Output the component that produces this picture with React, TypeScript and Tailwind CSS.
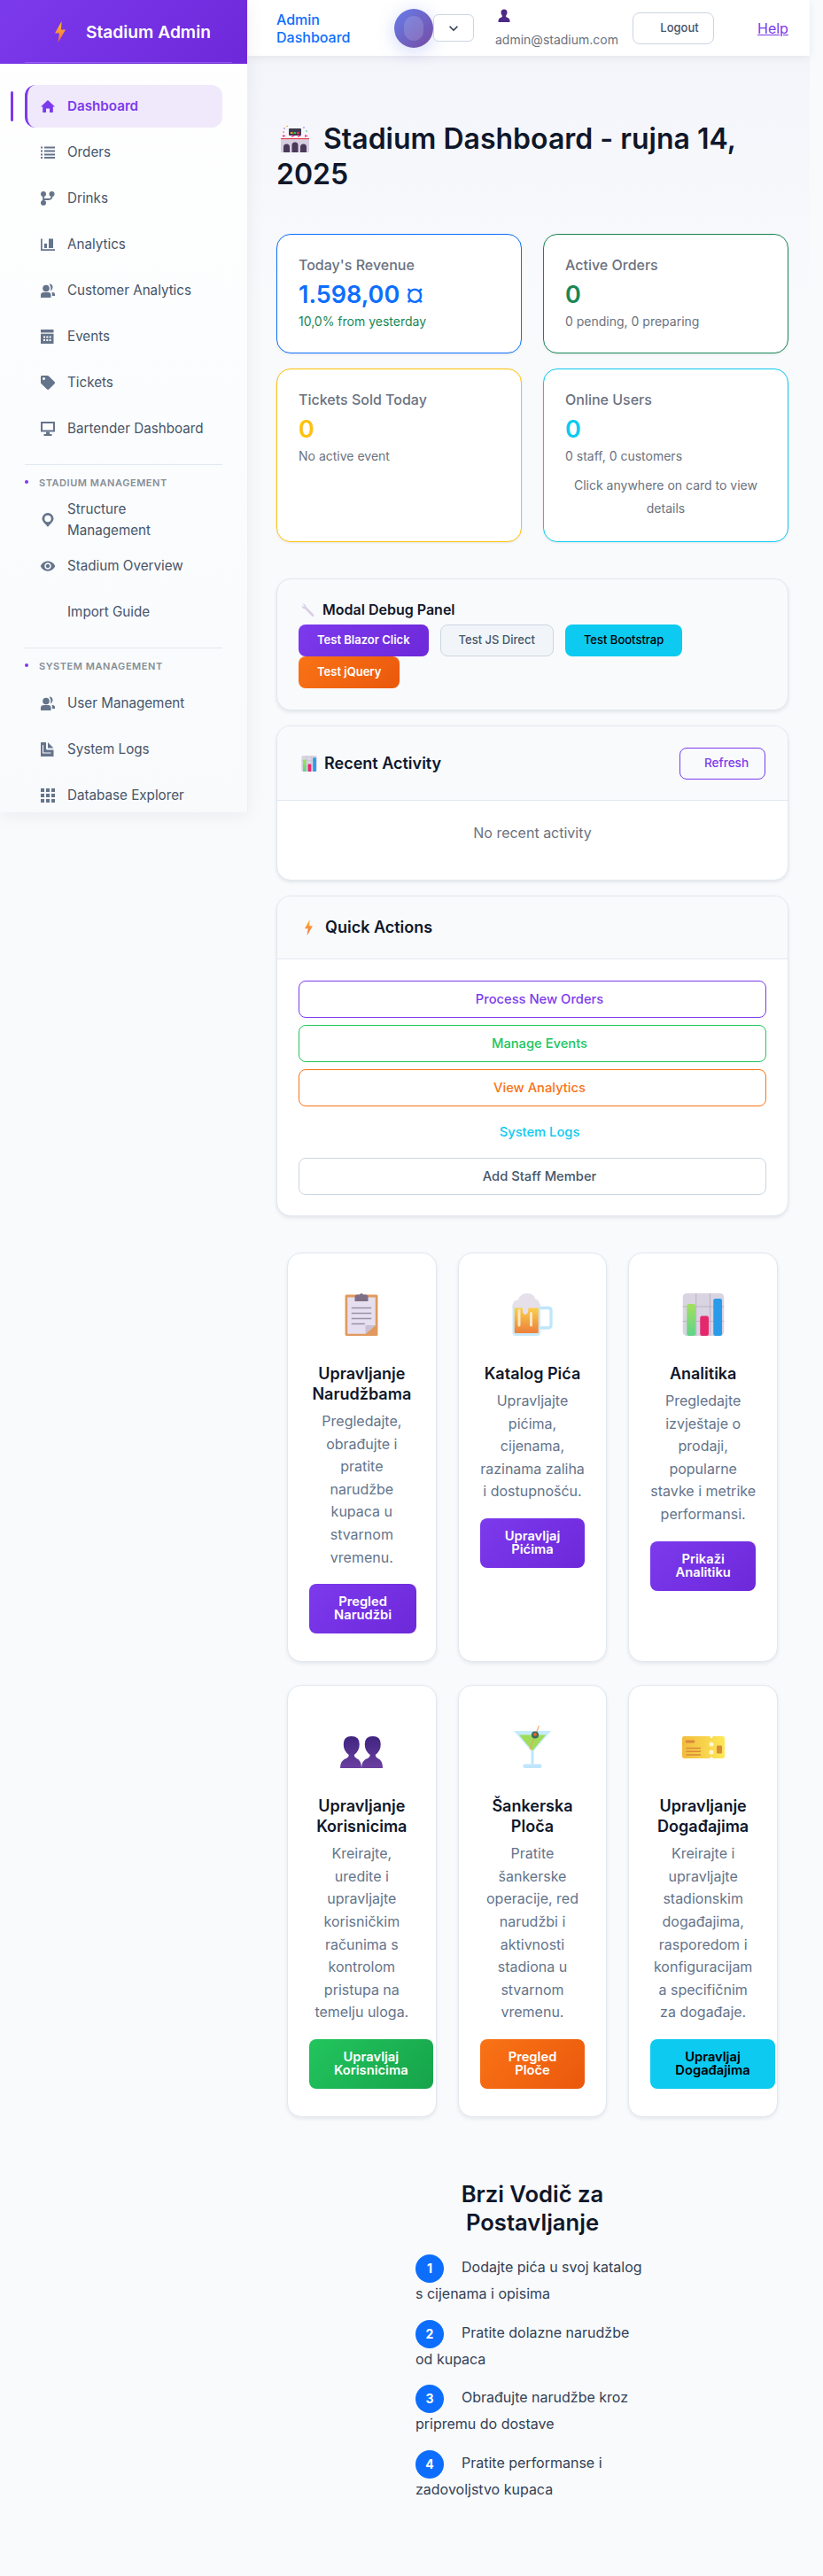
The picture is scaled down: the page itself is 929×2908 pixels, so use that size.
import React from "react";
import { MdVisibility, MdKeyboardArrowDown } from "react-icons/md";
import { FaTag } from "react-icons/fa";

const Bolt = ({ id, cls }: { id: string; cls: string }) => (
  <svg viewBox="0 0 14 24" className={cls}>
    <defs>
      <linearGradient id={id} x1="0" y1="0" x2="0" y2="1">
        <stop offset="0" stopColor="#fbbf24" />
        <stop offset="0.5" stopColor="#fb923c" />
        <stop offset="1" stopColor="#f0643c" />
      </linearGradient>
    </defs>
    <path d="M8.5 0 L1 13.5 L6 13.5 L4.5 24 L13 9.5 L8 9.5 Z" fill={`url(#${id})`} />
  </svg>
);

const Stadium = () => (
  <svg viewBox="0 0 34 32" className="mr-[15px] ml-1 inline-block h-[32px] w-[34px] align-[-5px]">
    <rect x="10" y="4" width="14" height="8" rx="1" fill="#403a4f" />
    <rect x="12" y="8" width="2.5" height="2" fill="#f59e0b" />
    <rect x="15.5" y="8" width="2.5" height="2" fill="#22c55e" />
    <rect x="19" y="8" width="2.5" height="2" fill="#ef4444" />
    <circle cx="5" cy="4" r="0.8" fill="#8b5cf6" />
    <circle cx="8" cy="1.5" r="0.8" fill="#f59e0b" />
    <circle cx="27" cy="3" r="0.8" fill="#8b5cf6" />
    <circle cx="30" cy="7" r="0.8" fill="#22c55e" />
    <circle cx="4" cy="8" r="0.8" fill="#ef4444" />
    <path d="M3 11 l4 1.5 -4 1.5z M13 11 l4 1.5 -4 1.5z M20 11 l4 1.5 -4 1.5z M28 11 l4 1.5 -4 1.5z" fill="#ec4899" />
    <rect x="1" y="15" width="32" height="1.5" fill="#e0424f" />
    <rect x="1" y="16.5" width="32" height="14.5" fill="#d6cfe0" />
    <path d="M4 31 v-6 a3.5 3.5 0 0 1 7 0 v6z M13.5 31 v-8 a3.5 3.5 0 0 1 7 0 v8z M23 31 v-6 a3.5 3.5 0 0 1 7 0 v6z" fill="#4a3a5a" />
  </svg>
);

const Wrench = () => (
  <svg viewBox="0 0 16 16" className="h-[17px] w-[16px] shrink-0">
    <path d="M1 1 C3 0.5 5.5 2 5.5 4.5 L14 13 A1.4 1.4 0 0 1 12 15 L4 6.8 C1.8 6.8 0.4 4.5 1 3 L3 4.5 L3.8 3 Z" fill="#d9cfe6" />
  </svg>
);

const Chart = ({ id, cls }: { id: string; cls: string }) => (
  <svg viewBox="0 0 32 32" className={cls} preserveAspectRatio="none">
    <defs>
      <linearGradient id={id} x1="0" y1="0" x2="0" y2="1">
        <stop offset="0" stopColor="#a3e05f" />
        <stop offset="1" stopColor="#5fd38a" />
      </linearGradient>
    </defs>
    <rect x="0.5" y="0" width="31" height="32" rx="3" fill="#d9d4e2" />
    <path d="M10.5 0 V32 M21 0 V32 M0.5 10 H31.5 M0.5 21 H31.5" stroke="#b9b3c4" strokeWidth="0.7" />
    <rect x="3.5" y="8" width="6.5" height="24" rx="1.5" fill={`url(#${id})`} />
    <rect x="13.5" y="17" width="6.5" height="15" rx="1.5" fill="#e5286e" />
    <rect x="23.5" y="4" width="6.5" height="28" rx="1.5" fill="#2a9be8" />
  </svg>
);

const Clipboard = () => (
  <svg viewBox="0 0 32 32" className="h-12 w-12">
    <rect x="3.7" y="1" width="24.6" height="31" rx="1" fill="#e09a5f" />
    <path d="M5.5 3 H26.5 V24 L19 30.5 H5.5 Z" fill="#e6dff0" />
    <path d="M19 30.5 L26.5 24 H20 Q19 24 19 25 Z" fill="#c9c0d4" />
    <path d="M11 3 Q11 1 13 1 H14.5 Q16 -1 17.5 1 H19 Q21 1 21 3 V6 H11 Z" fill="#7d7086" />
    <path d="M8.5 11 H23.5 M8.5 15 H23.5 M8.5 19 H23.5 M8.5 23 H18.5" stroke="#9b90a6" strokeWidth="1" />
  </svg>
);

const Beer = () => (
  <svg viewBox="0 0 32 32" className="h-12 w-12">
    <defs>
      <linearGradient id="beerg" x1="0" y1="0" x2="0" y2="1">
        <stop offset="0" stopColor="#fcd34d" />
        <stop offset="1" stopColor="#ec7f3c" />
      </linearGradient>
    </defs>
    <path d="M22 11 H28 Q30 11 30 13 V24 Q30 26 28 26 H22" fill="none" stroke="#bfe6fb" strokeWidth="2.2" />
    <rect x="1" y="7" width="21" height="25" rx="2.5" fill="#c7e9fb" />
    <rect x="2.5" y="10" width="18" height="20" rx="1" fill="url(#beerg)" />
    <rect x="5" y="12" width="2" height="13" rx="1" fill="#fde8c2" />
    <rect x="14" y="14" width="2" height="11" rx="1" fill="#fde8c2" />
    <path d="M1 11 Q1 5 5 5 Q7 0 12 0 Q17 0 18 4 Q22 5 22 11 H13 Q13 16 10.5 16 Q8.5 16 8.5 11 Z" fill="#e6e0ea" />
  </svg>
);

const bust = "M0 32 Q0 26 5 24.5 Q6.5 24 6.5 22 Q2.5 19 2.5 14 Q2.5 8 8.5 8 Q14.5 8 14.5 14 Q14.5 19 10.5 22 Q10.5 24 12 24.5 Q16 26 16 32 Z";

const People = () => (
  <svg viewBox="0 0 32 32" className="h-12 w-12">
    <defs>
      <linearGradient id="pg" x1="0" y1="0" x2="0" y2="1">
        <stop offset="0" stopColor="#3f2480" />
        <stop offset="1" stopColor="#6a3fa0" />
      </linearGradient>
    </defs>
    <path d={bust} fill="url(#pg)" />
    <path d={bust} fill="url(#pg)" transform="translate(16 0)" />
  </svg>
);

const UserBust = () => (
  <svg viewBox="0 0 14 15" className="h-[15px] w-[14px]">
    <path d="M0.5 15 Q0 10.5 4 9.5 Q5 9 5 8 Q3.5 6.5 3.5 4 Q3.5 0.5 7 0.5 Q10.5 0.5 10.5 4 Q10.5 6.5 9 8 Q9 9 10 9.5 Q14 10.5 13.5 15 Z" fill="#4c2a85" />
  </svg>
);

const Martini = () => (
  <svg viewBox="0 0 32 32" className="h-12 w-12">
    <path d="M2 4 H30 L16 20 Z" fill="#c4ebfb" />
    <path d="M6 7 H26 L16 19 Z" fill="#9fdc5a" />
    <rect x="15" y="19" width="2" height="10" fill="#bfe6fb" />
    <rect x="9" y="29" width="14" height="3" rx="1.2" fill="#bfe6fb" />
    <path d="M21 0 L14 18" stroke="#f0a060" strokeWidth="0.7" />
    <circle cx="18" cy="7" r="2.7" fill="#3b6a5a" />
    <circle cx="18" cy="6.6" r="1.3" fill="#e8642c" />
  </svg>
);

const Ticket = () => (
  <svg viewBox="0 0 32 32" className="h-12 w-12">
    <defs>
      <linearGradient id="tg" x1="0" y1="0" x2="1" y2="0">
        <stop offset="0" stopColor="#f2bc3e" />
        <stop offset="1" stopColor="#fde857" />
      </linearGradient>
    </defs>
    <path d="M1.5 8 H21 Q21 9.5 22 9.5 Q23 9.5 23 8 H30.5 Q32 8 32 9.5 V23 Q32 24.7 30.5 24.7 H23 Q23 23.5 22 23.5 Q21 23.5 21 24.7 H1.5 Q0 24.7 0 23 V9.5 Q0 8 1.5 8 Z" fill="url(#tg)" />
    <rect x="2.5" y="11" width="7" height="2" rx="0.8" fill="#d9893a" />
    <path d="M3 17 H14 M3 19.5 H14 M3 22 H14" stroke="#d9893a" strokeWidth="1" />
    <circle cx="22" cy="14" r="1.7" fill="#fff6d0" />
    <circle cx="22" cy="20" r="1.7" fill="#fff6d0" />
    <rect x="26" y="15" width="4" height="6" rx="0.8" fill="#d9893a" />
  </svg>
);

const ico = "h-4 w-4 fill-current";

const IconHome = () => (
  <svg viewBox="0 0 16 16" className={ico}>
    <path d="M8 1 L16 8.5 H13.8 V15 H10 V10.5 H6 V15 H2.2 V8.5 H0 Z" />
  </svg>
);
const IconList = () => (
  <svg viewBox="0 0 16 16" className={ico}>
    <path d="M0 1.5 H2 V3.5 H0Z M4 1.5 H16 V3.5 H4Z M0 5.5 H2 V7.5 H0Z M4 5.5 H16 V7.5 H4Z M0 9.5 H2 V11.5 H0Z M4 9.5 H16 V11.5 H4Z M0 13 H2 V15 H0Z M4 13 H16 V15 H4Z" />
  </svg>
);
const IconDrinks = () => (
  <svg viewBox="0 0 16 16" className="h-4 w-4">
    <circle cx="3" cy="3" r="3" fill="currentColor" />
    <circle cx="12.5" cy="3" r="3" fill="currentColor" />
    <circle cx="3" cy="13" r="3" fill="currentColor" />
    <path d="M3 3 V13 M12.5 3 V5.5 Q12.5 9 9 9 H3" fill="none" stroke="currentColor" strokeWidth="1.8" />
  </svg>
);
const IconBars = () => (
  <svg viewBox="0 0 16 16" className={ico}>
    <path d="M0 1.5 H1.7 V13.2 H16 V15 H0 Z M4 7 H7 V12 H4 Z M9 1.5 H14 V12 H9 Z" />
  </svg>
);
const IconUsers = () => (
  <svg viewBox="0 0 16 16" className={ico}>
    <circle cx="6" cy="5.5" r="3.8" />
    <path d="M0 16 V13 Q0 10 3.5 10 H8.5 Q11.5 10 11.5 13 V16 Z" />
    <path d="M9.5 0.5 A4 4 0 0 1 13.5 4.5 Q13.5 7 11 8.3 Q11.8 6 11.2 4 Q10.8 2 9.5 0.5 Z M12.5 10 H13.5 Q16 10 16 12.5 V14 H12.8 Q13.2 11.5 12.5 10 Z" />
  </svg>
);
const IconCal = () => (
  <svg viewBox="0 0 16 16" className={ico}>
    <path fillRule="evenodd" d="M0 0 H14.5 V3.5 H0 Z M0 4.8 H14.5 V16 H0 Z M3 7.5 V9.5 H5 V7.5 Z M6.3 7.5 V9.5 H8.3 V7.5 Z M9.6 7.5 V9.5 H11.6 V7.5 Z M3 11 V13 H5 V11 Z M6.3 11 V13 H8.3 V11 Z M9.6 11 V13 H11.6 V11 Z" />
  </svg>
);
const IconMonitor = () => (
  <svg viewBox="0 0 16 16" className="h-4 w-4">
    <rect x="1" y="1" width="14" height="9.5" fill="none" stroke="currentColor" strokeWidth="2" />
    <path d="M6 11.5 H10 V14 H12.5 V16 H3.5 V14 H6 Z" fill="currentColor" />
  </svg>
);
const IconPin = () => (
  <svg viewBox="0 0 16 16" className={ico}>
    <path fillRule="evenodd" d="M8 0 A6.5 6.5 0 0 1 14.5 6.5 C14.5 10 10 13 8 16 C6 13 1.5 10 1.5 6.5 A6.5 6.5 0 0 1 8 0 Z M8 2.8 A3.7 3.7 0 1 0 8 10.2 A3.7 3.7 0 1 0 8 2.8 Z" />
  </svg>
);
const IconLog = () => (
  <svg viewBox="0 0 16 16" className={ico}>
    <path d="M0 0 H6 V7 Q6 8.5 7.5 8.5 H14.5 V16 H0 Z M8 0 L14.5 6.5 H8 Z" />
    <path d="M2.5 3 V12 H11.5" fill="none" stroke="#fafbfd" strokeWidth="1.1" />
  </svg>
);
const IconGrid = () => (
  <svg viewBox="0 0 16 16" className={ico}>
    <path d="M0 0h4v4H0z M6 0h4v4H6z M12 0h4v4h-4z M0 6h4v4H0z M6 6h4v4H6z M12 6h4v4h-4z M0 12h4v4H0z M6 12h4v4H6z M12 12h4v4h-4z" />
  </svg>
);

function NavItem({ icon, label, narrow }: { icon?: React.ReactNode; label: string; narrow?: boolean }) {
  return (
    <div className="mb-1 flex h-12 items-center rounded-xl pl-[18px] text-[15.2px] leading-6 text-[#475569]">
      <span className="flex h-4 w-4 shrink-0 items-center justify-center text-[#64748b]">{icon}</span>
      <span className={`ml-3.5 ${narrow ? "max-w-[120px]" : ""}`}>{label}</span>
    </div>
  );
}

function SectionLabel({ children }: { children: string }) {
  return (
    <div className="relative mt-[10px] mb-2 h-5 pl-4 text-[11px] leading-5 font-semibold uppercase tracking-[0.55px] text-[#868e96]">
      <span className="absolute left-0 top-[7px] h-1 w-1 rounded-full bg-[#7c3aed]" />
      {children}
    </div>
  );
}

function Sidebar() {
  return (
    <aside className="relative z-10 h-[917px] w-[280px] shrink-0 overflow-hidden border-r border-[#eef0f5] bg-[linear-gradient(180deg,#ffffff,#f8fafc)] shadow-[0_4px_20px_rgba(15,23,42,0.06)]">
      <div className="relative flex h-[72px] items-center bg-[linear-gradient(135deg,#7c3aed,#6d28d9)] pl-[61px] text-white">
        <Bolt id="bolt-side" cls="h-[24px] w-[14px]" />
        <span className="ml-[22px] text-[19.2px] font-semibold">Stadium Admin</span>
        <span className="absolute bottom-[1px] left-[28px] h-px w-[234px] bg-white/20" />
      </div>
      <nav className="relative px-7 pt-6">
        <span className="absolute left-3 top-[31px] h-[34px] w-[3px] rounded bg-[#7c3aed]" />
        <div className="mb-1 flex h-12 items-center rounded-xl border-l-[3px] border-[#7c3aed] bg-[#f0e9fb] pl-[15px] text-[15.2px] font-semibold text-[#7c3aed]">
          <IconHome />
          <span className="ml-3.5">Dashboard</span>
        </div>
        <NavItem icon={<IconList />} label="Orders" />
        <NavItem icon={<IconDrinks />} label="Drinks" />
        <NavItem icon={<IconBars />} label="Analytics" />
        <NavItem icon={<IconUsers />} label="Customer Analytics" />
        <NavItem icon={<IconCal />} label="Events" />
        <NavItem icon={<FaTag className="h-4 w-4" />} label="Tickets" />
        <NavItem icon={<IconMonitor />} label="Bartender Dashboard" />
        <div className="mt-4 h-px bg-[#e2e8f0]" />
        <SectionLabel>Stadium Management</SectionLabel>
        <NavItem icon={<IconPin />} label="Structure Management" narrow />
        <NavItem icon={<MdVisibility className="h-[18px] w-[18px] shrink-0" />} label="Stadium Overview" />
        <NavItem label="Import Guide" />
        <div className="mt-4 h-px bg-[#e2e8f0]" />
        <SectionLabel>System Management</SectionLabel>
        <NavItem icon={<IconUsers />} label="User Management" />
        <NavItem icon={<IconLog />} label="System Logs" />
        <NavItem icon={<IconGrid />} label="Database Explorer" />
      </nav>
    </aside>
  );
}

function TopBar() {
  return (
    <header className="flex h-[63px] items-center bg-white pl-8 shadow-[0_2px_10px_rgba(15,23,42,0.07)]">
      <div className="w-[133px] shrink-0 text-base font-medium leading-5 text-[#0d6efd]">
        Admin
        <br />
        Dashboard
      </div>
      <div className="flex h-[44px] w-[44px] shrink-0 items-center justify-center rounded-full bg-[linear-gradient(135deg,#667eea,#764ba2)] shadow-[0_4px_20px_rgba(102,126,234,0.3)]">
        <span className="h-7 w-[22px] rounded-full bg-white/15" />
      </div>
      <button className="flex h-[31px] w-[46px] shrink-0 items-center justify-center rounded-md border border-[#cbd5e1] bg-white text-[#334155]">
        <MdKeyboardArrowDown className="h-5 w-5" />
      </button>
      <div className="ml-6 w-[155px] shrink-0 pt-[3px]">
        <div className="ml-[3px] h-[23px]">
          <UserBust />
        </div>
        <div className="text-sm leading-6 text-[#6b7280]">admin@stadium.com</div>
      </div>
      <button className="h-9 w-[92px] shrink-0 rounded-lg border border-[#cbd5e1] bg-white pl-[14px] text-[13px] font-medium text-[#475569]">
        Logout
      </button>
      <a className="ml-[49px] text-base text-[#7c3aed] underline">Help</a>
    </header>
  );
}

function Stat({ label, value, sub, border, valueCls, subCls, children }: { label: string; value: string; sub: string; border: string; valueCls: string; subCls?: string; children?: React.ReactNode }) {
  return (
    <div className={`rounded-2xl border bg-white p-6 shadow-[0_1px_3px_rgba(15,23,42,0.08)] ${border}`}>
      <div className="text-base font-medium leading-5 text-[#6b7280]">{label}</div>
      <div className={`mt-[7px] text-[27px] font-semibold leading-[34px] ${valueCls}`}>{value}</div>
      <div className={`mt-px text-sm leading-[23px] ${subCls ?? "text-[#6b7280]"}`}>{sub}</div>
      {children}
    </div>
  );
}

const panelCls = "overflow-hidden rounded-2xl border border-[#e2e8f0] bg-white shadow-[0_2px_4px_rgba(15,23,42,0.09)]";

function QuickBtn({ label, cls }: { label: string; cls: string }) {
  return (
    <button className={`h-[42px] w-full rounded-lg border bg-transparent pl-4 text-[14.72px] font-medium ${cls}`}>{label}</button>
  );
}

function Feature({ icon, title, text, btn, btnCls }: { icon: React.ReactNode; title: string; text: string; btn: string; btnCls?: string }) {
  return (
    <div className="flex px-3">
      <div className="w-full rounded-2xl border border-[#e2e8f0] bg-white px-6 pt-6 pb-[31px] text-center shadow-[0_2px_4px_rgba(15,23,42,0.08)]">
        <div className="mb-[10px] flex h-[90px] items-center justify-center">{icon}</div>
        <h3 className="mb-[7px] text-lg font-semibold leading-[23px] text-[#0f172a]">{title}</h3>
        <p className="mb-[17px] text-base leading-[25.6px] break-words text-[#64748b]">{text}</p>
        <button className={`block w-fit rounded-lg px-7 py-[13px] text-[14.72px] font-semibold leading-[15px] ${btnCls ?? "bg-[linear-gradient(135deg,#7c3aed,#6d28d9)] text-white"}`}>{btn}</button>
      </div>
    </div>
  );
}

function Step({ n, text }: { n: number; text: string }) {
  return (
    <div className="mb-4 text-base leading-[25.6px] text-[#334155]">
      <span className="mr-5 inline-flex h-8 w-8 items-center justify-center rounded-full bg-[#0d6efd] align-middle text-sm font-bold text-white">{n}</span>
      {text}
    </div>
  );
}

export default function App() {
  return (
    <div className="flex min-h-[2908px] w-[929px] bg-[#f9fafc] font-['Inter',sans-serif]">
      <Sidebar />
      <div className="w-[634px] shrink-0 bg-[linear-gradient(180deg,#f4f5fb_63px,#f8fafc_340px)]">
        <TopBar />
        <main className="pl-8 pr-6 pt-[74px]">
          <h1 className="mb-[47px] text-[32px] font-semibold leading-10 text-[#0f172a]">
            <Stadium />
            Stadium Dashboard - rujna 14, 2025
          </h1>

          <div className="grid grid-cols-2 gap-x-6 gap-y-[17px]">
            <Stat label="Today's Revenue" value="1.598,00 ¤" sub="10,0% from yesterday" border="border-[#0d6efd]" valueCls="text-[#0d6efd]" subCls="text-[#198754]" />
            <Stat label="Active Orders" value="0" sub="0 pending, 0 preparing" border="border-[#198754]" valueCls="text-[#198754]" />
            <Stat label="Tickets Sold Today" value="0" sub="No active event" border="border-[#ffc107]" valueCls="text-[#ffc107]" />
            <Stat label="Online Users" value="0" sub="0 staff, 0 customers" border="border-[#0dcaf0]" valueCls="text-[#0dcaf0]">
              <p className="mt-[9px] text-center text-sm leading-[26px] text-[#6b7280]">Click anywhere on card to view details</p>
            </Stat>
          </div>

          <section className={`mt-[41px] h-[149px] !bg-[#f8fafc] px-6 pt-6 ${panelCls}`}>
            <div className="flex items-center gap-2 text-base font-semibold leading-5 text-[#0f172a]">
              <span className="ml-[3px]">
                <Wrench />
              </span>
              Modal Debug Panel
            </div>
            <div className="mt-[7px] flex flex-wrap gap-x-[13px]">
              <button className="h-9 rounded-lg bg-[linear-gradient(135deg,#7c3aed,#6d28d9)] px-[21px] text-[13px] font-semibold text-white">Test Blazor Click</button>
              <button className="h-9 rounded-lg border border-[#cbd5e1] bg-[#f1f5f9] px-5 text-[13px] font-medium text-[#475569]">Test JS Direct</button>
              <button className="h-9 rounded-lg bg-[#0dcaf0] px-[21px] text-[13px] font-medium text-black">Test Bootstrap</button>
              <button className="h-9 rounded-lg bg-[linear-gradient(135deg,#f97316,#ea580c)] px-[21px] text-[13px] font-semibold text-white">Test jQuery</button>
            </div>
          </section>

          <section className={`mt-[17px] ${panelCls}`}>
            <div className="flex h-[84px] items-center justify-between border-b border-[#e2e8f0] bg-[#f8fafc] pl-[27px] pr-[25px]">
              <div className="flex items-center gap-2 text-lg font-semibold text-[#0f172a]">
                <Chart id="gb-h" cls="h-[18px] w-[18px]" />
                Recent Activity
              </div>
              <button className="h-9 w-[97px] rounded-lg border border-[#7c3aed] bg-transparent pl-[9px] text-[13.6px] font-medium text-[#7c3aed]">Refresh</button>
            </div>
            <div className="h-[89px] pt-[24px] text-center text-base leading-6 text-[#6b7280]">No recent activity</div>
          </section>

          <section className={`mt-[17px] ${panelCls}`}>
            <div className="flex h-[71px] items-center gap-[13px] border-b border-[#e2e8f0] bg-[#f8fafc] pl-[30px] text-lg font-semibold text-[#0f172a]">
              <Bolt id="bolt-quick" cls="h-[18px] w-[11px]" />
              Quick Actions
            </div>
            <div className="flex flex-col gap-2 px-6 pt-6 pb-[23px]">
              <QuickBtn label="Process New Orders" cls="border-[#7c3aed] text-[#7c3aed]" />
              <QuickBtn label="Manage Events" cls="border-[#22c55e] text-[#22c55e]" />
              <QuickBtn label="View Analytics" cls="border-[#f97316] text-[#f97316]" />
              <QuickBtn label="System Logs" cls="border-transparent text-[#0dcaf0]" />
              <QuickBtn label="Add Staff Member" cls="border-[#cbd5e1] text-[#475569]" />
            </div>
          </section>

          <div className="mt-[41px] grid grid-cols-3 gap-y-[26px]">
            <Feature icon={<Clipboard />} title="Upravljanje Narudžbama" text="Pregledajte, obrađujte i pratite narudžbe kupaca u stvarnom vremenu." btn="Pregled Narudžbi" />
            <Feature icon={<Beer />} title="Katalog Pića" text="Upravljajte pićima, cijenama, razinama zaliha i dostupnošću." btn="Upravljaj Pićima" />
            <Feature icon={<Chart id="gb-f" cls="h-12 w-12" />} title="Analitika" text="Pregledajte izvještaje o prodaji, popularne stavke i metrike performansi." btn="Prikaži Analitiku" />
            <Feature icon={<People />} title="Upravljanje Korisnicima" text="Kreirajte, uredite i upravljajte korisničkim računima s kontrolom pristupa na temelju uloga." btn="Upravljaj Korisnicima" btnCls="bg-[linear-gradient(135deg,#22c55e,#16a34a)] text-white" />
            <Feature icon={<Martini />} title="Šankerska Ploča" text="Pratite šankerske operacije, red narudžbi i aktivnosti stadiona u stvarnom vremenu." btn="Pregled Ploče" btnCls="bg-[linear-gradient(135deg,#f97316,#ea580c)] text-white" />
            <Feature icon={<Ticket />} title="Upravljanje Događajima" text="Kreirajte i upravljajte stadionskim događajima, rasporedom i konfiguracijama specifičnim za događaje." btn="Upravljaj Događajima" btnCls="bg-[#0dcaf0] text-black" />
          </div>

          <section className="mx-auto mt-[71px] w-[264px]">
            <h2 className="mb-5 text-center text-[25.6px] font-semibold leading-8 text-[#0f172a]">Brzi Vodič za Postavljanje</h2>
            <Step n={1} text="Dodajte pića u svoj katalog s cijenama i opisima" />
            <Step n={2} text="Pratite dolazne narudžbe od kupaca" />
            <Step n={3} text="Obrađujte narudžbe kroz pripremu do dostave" />
            <Step n={4} text="Pratite performanse i zadovoljstvo kupaca" />
          </section>
        </main>
      </div>
    </div>
  );
}
